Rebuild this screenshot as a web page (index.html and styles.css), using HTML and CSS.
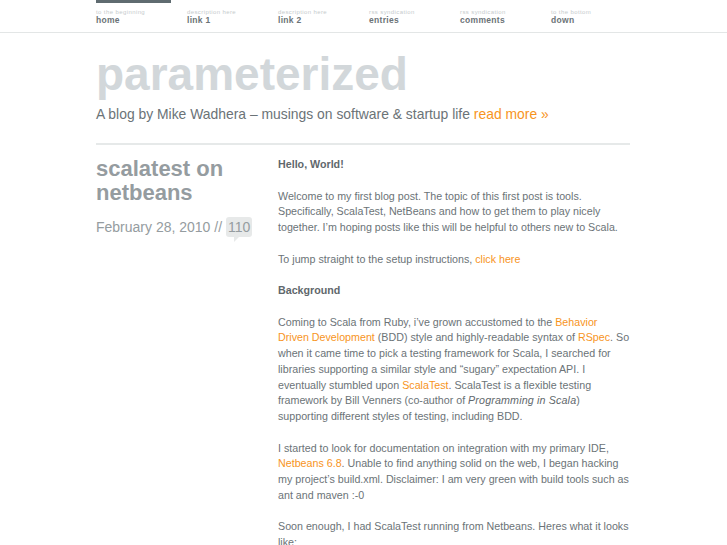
FILE: index.html
```html
<!DOCTYPE html>
<html lang="en">

<head>
    <meta charset="UTF-8" />
    <title>parameterized</title>
    <link rel="stylesheet" href="styles.css">
</head>

<body>
    <div class="nav">
        <ul class="wrap menu">
            <li class="current"><a href="#"><span>to the beginning</span>home</a></li>
            <li><a href="#"><span>description here</span>link 1</a></li>
            <li><a href="#"><span>description here</span>link 2</a></li>
            <li><a href="#"><span>rss syndication</span>entries</a></li>
            <li><a href="#"><span>rss syndication</span>comments</a></li>
            <li><a href="#"><span>to the bottom</span>down</a></li>
        </ul>
    </div>

    <div class="wrap">
        <div class="header">
            <h1>parameterized</h1>
            <p class="tagline">A blog by Mike Wadhera &ndash; musings on software &amp; startup life <a href="#">read more &raquo;</a></p>
        </div>

        <div class="post">
            <div class="meta">
                <h2>scalatest on netbeans</h2>
                <p class="date">February 28, 2010 // <span class="count">110</span></p>
            </div>
            <div class="entry">
                <p><strong>Hello, World!</strong></p>
                <p>Welcome to my first blog post. The topic of this first post is tools. Specifically, ScalaTest, NetBeans and how to get them to play nicely together. I&rsquo;m hoping posts like this will be helpful to others new to Scala.</p>
                <p>To jump straight to the setup instructions, <a href="#">click here</a></p>
                <p><strong>Background</strong></p>
                <p>Coming to Scala from Ruby, i&rsquo;ve grown accustomed to the <a href="#">Behavior Driven Development</a> (BDD) style and highly-readable syntax of <a href="#">RSpec</a>. So when it came time to pick a testing framework for Scala, I searched for libraries supporting a similar style and &ldquo;sugary&rdquo; expectation API. I eventually stumbled upon <a href="#">ScalaTest</a>. ScalaTest is a flexible testing framework by Bill Venners (co-author of <em>Programming in Scala</em>) supporting different styles of testing, including BDD.</p>
                <p>I started to look for documentation on integration with my primary IDE, <a href="#">Netbeans 6.8</a>. Unable to find anything solid on the web, I began hacking my project&rsquo;s build.xml. Disclaimer: I am very green with build tools such as ant and maven :-0</p>
                <p>Soon enough, I had ScalaTest running from Netbeans. Heres what it looks like:</p>
            </div>
        </div>
    </div>
</body>

</html>
```

FILE: styles.css
```css
body {
    margin: 0;
    font-family: "Liberation Sans", Arial, sans-serif;
    color: #6b7377;
    background: #fff;
}

a {
    color: #f7941d;
    text-decoration: none;
}

.wrap {
    width: 534px;
    margin: 0 0 0 96px;
}

.nav {
    border-bottom: 1px solid #e3e6e6;
    height: 32px;
}

.menu {
    list-style: none;
    padding: 0;
    margin-top: 0;
    margin-bottom: 0;
    display: flex;
}

.menu li {
    flex: none;
    width: 91px;
    border-top: 3px solid transparent;
}

.menu li.current {
    border-top-color: #5f6b70;
    width: 75px;
    margin-right: 16px;
}

.menu a {
    display: block;
    padding-top: 5px;
    font-size: 8.5px;
    font-weight: bold;
    line-height: 9px;
    color: #6b7377;
    letter-spacing: 0.3px;
}

.menu span {
    display: block;
    font-size: 6px;
    font-weight: normal;
    line-height: 8px;
    color: #c6cbcd;
    letter-spacing: 0.4px;
}

.header {
    padding-top: 14px;
    border-bottom: 2px solid #e6e9e9;
    padding-bottom: 19px;
}

.header h1 {
    margin: 0;
    font-size: 46px;
    line-height: 54px;
    color: #d2d7da;
}

.tagline {
    margin: 3px 0 0;
    font-size: 13.9px;
    line-height: 20px;
}

.post {
    display: flex;
    padding-top: 9px;
}

.meta {
    width: 182px;
    flex: none;
}

.meta h2 {
    margin: 3px 0 0;
    font-size: 22px;
    line-height: 24px;
    color: #959ca0;
}

.date {
    margin: 12px 0 0;
    font-size: 14px;
    line-height: 20px;
    color: #959ca0;
}

.count {
    position: relative;
    display: inline-block;
    background: #e7e9e9;
    border-radius: 3px;
    padding: 1px 2px;
    line-height: 18px;
}

.count::after {
    content: "";
    position: absolute;
    left: 8px;
    bottom: -5px;
    border-left: 5px solid #e7e9e9;
    border-bottom: 5px solid transparent;
}

.entry {
    flex: 1;
    font-size: 10.7px;
    line-height: 15.75px;
    padding-top: 3px;
}

.entry p {
    margin: 0 0 15.75px;
}

.entry strong {
    color: #5f686c;
}

.entry em {
    color: #5f686c;
    letter-spacing: 0.15px;
}
```
